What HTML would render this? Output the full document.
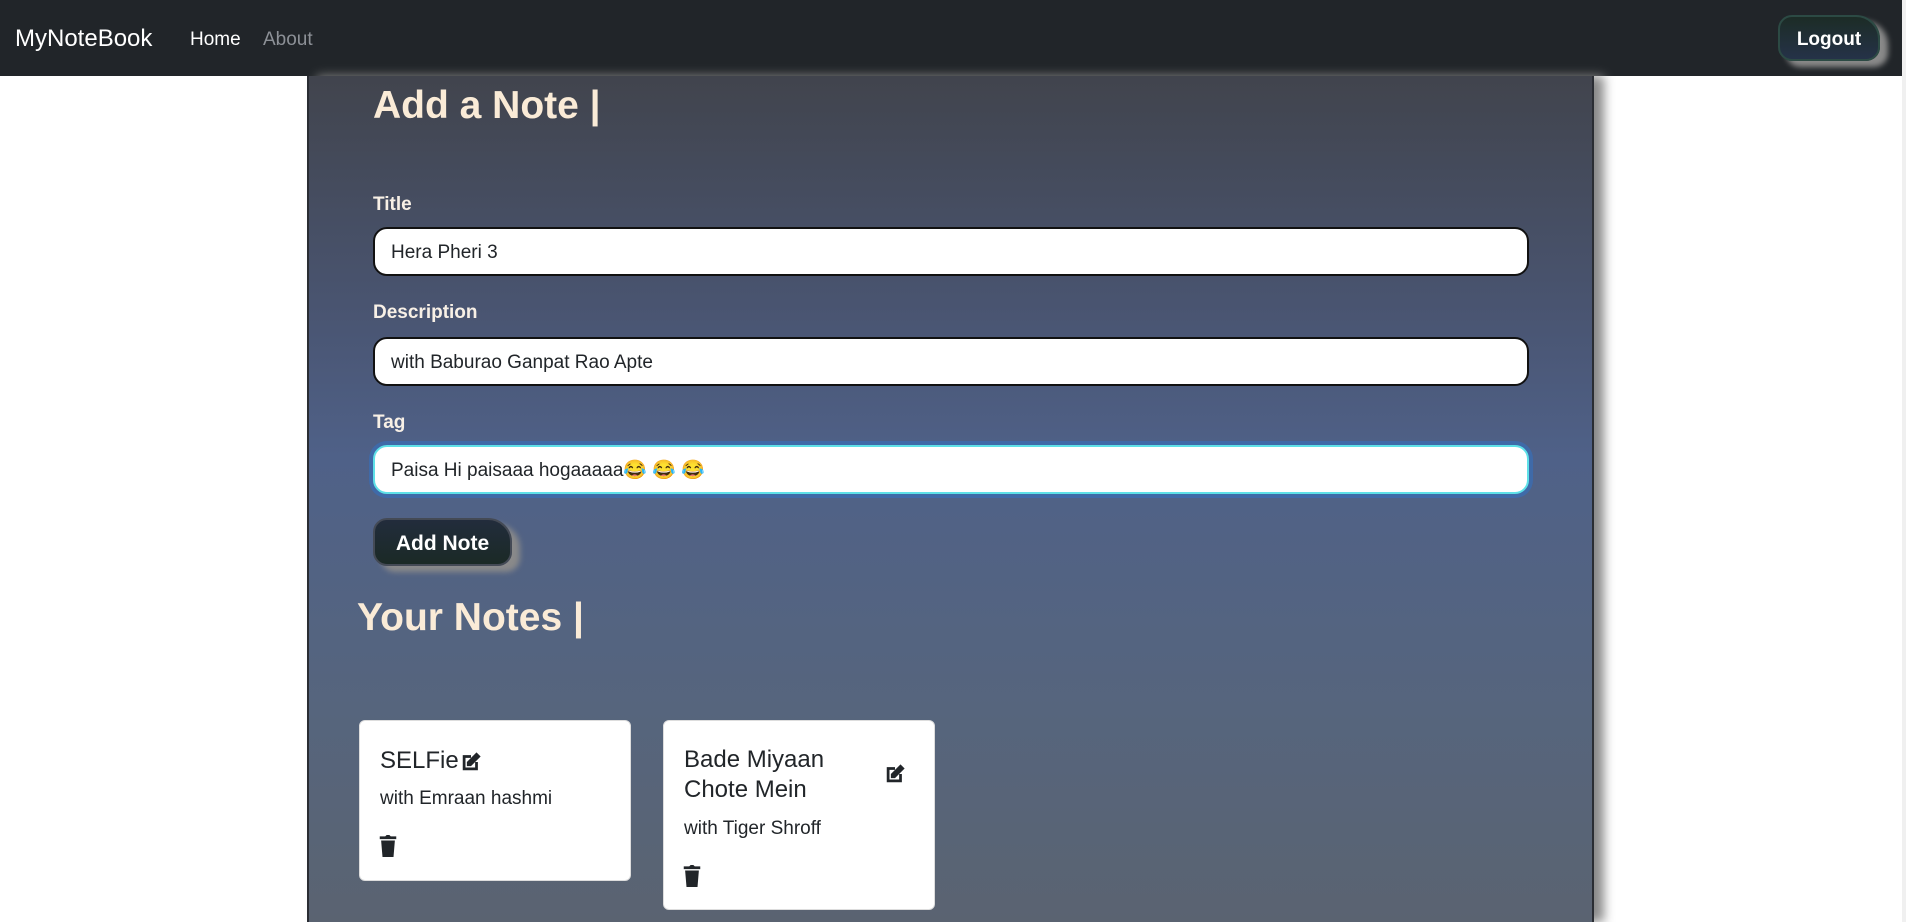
<!DOCTYPE html>
<html><head><meta charset="utf-8"><style>
*{box-sizing:border-box;margin:0;padding:0}
body{width:1906px;height:922px;overflow:hidden;background:#fff;font-family:"Liberation Sans",sans-serif;position:relative}
.nav{position:absolute;left:0;top:0;width:1902px;height:76px;background:#212529}
.brand{position:absolute;left:15px;top:25px;font-size:24px;color:#fff}
.nl{position:absolute;top:29px;font-size:19px}
.logout{position:absolute;left:1778px;top:15px;width:102px;height:46px;border-radius:14px 24px 14px 14px;border:2px solid #2c4a44;background:linear-gradient(#1c2c26,#253248);color:#fff;font-weight:bold;font-size:19px;text-align:center;line-height:45px;box-shadow:8px 6px 6px #8a8a8a}
.sb{position:absolute;left:1902px;top:0;width:4px;height:922px;background:#f0f0f0}
.panel{position:absolute;left:307px;top:76px;width:1287px;height:846px;background:linear-gradient(#41444d 0%,#4a5674 30%,#4f6188 45%,#56657d 75%,#5a6371 100%);border-left:2px solid #2a2d33;border-right:2px solid #2a2d33;box-shadow:10px 0 10px #8a8a8a}
h1{position:absolute;color:#faebd7;font-size:39px;font-weight:bold}
.lab{position:absolute;left:373px;color:#f8f0e6;font-weight:bold;font-size:19px}
.inp{position:absolute;left:373px;width:1156px;height:49px;background:#fff;border:2px solid #111;border-radius:14px;font-size:19px;padding-left:16px;line-height:47px;color:#212529}
.inp.f{border-color:#5ee0e8;box-shadow:0 0 0 4px #3f6aa8}
.add{position:absolute;left:373px;top:518px;width:139px;height:48px;border-radius:14px 24px 14px 14px;border:2px solid #444a55;background:linear-gradient(#222c3c,#1b2a26);color:#fff;font-weight:bold;font-size:21px;text-align:center;line-height:47px;box-shadow:8px 6px 6px #8a8a8a}
.card{position:absolute;top:720px;width:272px;background:#fff;border-radius:6px;border:1px solid #ddd}
.ct{position:absolute;font-size:24px;color:#212529}
.cb{position:absolute;font-size:19px;color:#212529}
svg{position:absolute}
</style></head><body>
<div class="nav">
<div class="brand">MyNoteBook</div>
<div class="nl" style="left:190px;color:#fff">Home</div>
<div class="nl" style="left:263px;color:#8c9096">About</div>
<div class="logout">Logout</div>
</div>
<div class="sb"></div>
<div class="panel"></div>
<h1 style="left:373px;top:84px">Add a Note |</h1>
<div class="lab" style="top:194px">Title</div>
<div class="inp" style="top:227px">Hera Pheri 3</div>
<div class="lab" style="top:302px">Description</div>
<div class="inp" style="top:337px">with Baburao Ganpat Rao Apte</div>
<div class="lab" style="top:412px">Tag</div>
<div class="inp f" style="top:445px">Paisa Hi paisaaa hogaaaaa😂 😂 😂</div>
<div class="add">Add Note</div>
<h1 style="left:357px;top:596px">Your Notes |</h1>
<div class="card" style="left:359px;height:161px">
<div class="ct" style="left:20px;top:26px">SELFie</div>
<svg style="left:100px;top:30px" width="22" height="22" viewBox="0 0 16 16"><path d="M2 3h6v2H4v7h7V8h2v6H2z" fill="#212529"/><path d="M12 1l3 3-7 7H5V8z" fill="#212529"/></svg>
<div class="cb" style="left:20px;top:67px">with Emraan hashmi</div>
<svg style="left:19px;top:114px" width="18" height="22" viewBox="0 0 12 16"><path d="M0 1h4l1-1h2l1 1h4v2H0z M1 4h10l-1 12H2z" fill="#212529"/></svg>
</div>
<div class="card" style="left:663px;height:190px">
<div class="ct" style="left:20px;top:24px;line-height:30px">Bade Miyaan<br>Chote Mein</div>
<svg style="left:220px;top:42px" width="22" height="22" viewBox="0 0 16 16"><path d="M2 3h6v2H4v7h7V8h2v6H2z" fill="#212529"/><path d="M12 1l3 3-7 7H5V8z" fill="#212529"/></svg>
<div class="cb" style="left:20px;top:97px">with Tiger Shroff</div>
<svg style="left:19px;top:144px" width="18" height="22" viewBox="0 0 12 16"><path d="M0 1h4l1-1h2l1 1h4v2H0z M1 4h10l-1 12H2z" fill="#212529"/></svg>
</div>
</body></html>
